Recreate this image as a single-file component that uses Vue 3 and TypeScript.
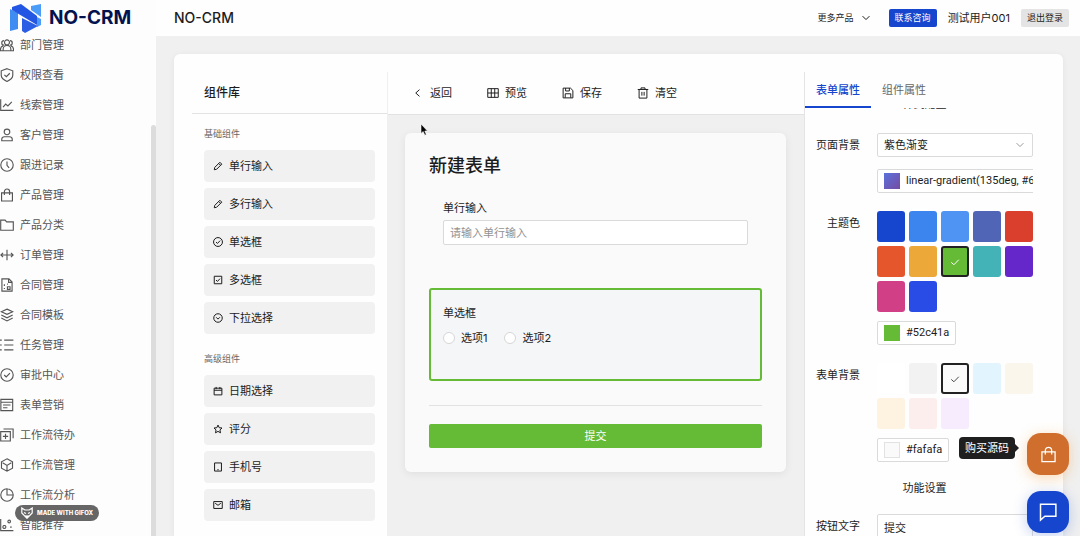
<script setup lang="ts">
import { ref } from 'vue'

interface Entry {
  icon: string
  label: string
}

// Outlines on a 16 × 16 grid, drawn with a stroke
const icons: Record<string, string> = {
  team: 'M8 2.2a2.8 2.8 0 1 1 0 5.6a2.8 2.8 0 1 1 0-5.6zM3.6 14.6v-1.8a4.4 4.4 0 0 1 8.8 0v1.8zM4.6 8.2a2.6 2.6 0 0 1 0-5.2M11.4 8.2a2.6 2.6 0 0 0 0-5.2M3.4 9a4 4 0 0 0-2.8 4v1.6h3M12.6 9a4 4 0 0 1 2.8 4v1.6h-3',
  shield: 'M8 .8l6.6 2.4v5.2c0 3.2-3 5.4-6.6 7C4.4 13.8 1.4 11.6 1.4 8.4V3.2zM5 7.8l2.3 2.2l3.9-4',
  chart: 'M.8 1.5v12.7h14.5M3.5 10.5l3-3.5l2.5 2l4.5-4.5',
  user: 'M8 1.3a3.2 3.2 0 1 1 0 6.4a3.2 3.2 0 1 1 0-6.4zM2 14.6v-2a3 3 0 0 1 3-2.600h6a3 3 0 0 1 3 2.6v2z',
  clock: 'M8 .9a7.1 7.1 0 1 1 0 14.2a7.1 7.1 0 1 1 0-14.2zM8 4v4.4l2.4 2.8',
  bag: 'M1.8 5.5h12.4v9.3H1.8zM5 8V4.2a3 3 0 0 1 6 0V8',
  folder: 'M.8 2.5h5l1.8 2h7.6v9.5H.8z',
  split: 'M8 2v12M.8 8h14.4M3.5 5.5L1 8l2.5 2.5M12.5 5.5L15 8l-2.5 2.5',
  doc: 'M2.2 1h8l3.6 3.6V15H2.2zM9.8 1v4h4M5 7v2M8 7h1M5 11.5v1M8.5 10h3v3h-3z',
  layers: 'M8 1.3l6.500 3l-6.500 3l-6.500-3zM1.500 8L8 11.200L14.500 8M1.500 11.500L8 14.800l6.500-3.300',
  list: 'M4.800 2.500h10.500M4.800 8h10.500M4.800 13.500h10.500M0 2.500h2M0 8h2M0 13.500h2',
  check: 'M8 .9a7.1 7.1 0 1 1 0 14.2a7.1 7.1 0 1 1 0-14.2zM4.8 8l2.3 2.3l4.3-4.5',
  form: 'M1 1.5h13.5v13H1zM1 4.8h13.5M3.5 8h8.5M3.5 11.2h5',
  addbox: 'M.8 4.2h11v10.6H.8zM4 1.2h11v10.5M6.3 6.5v6M3.3 9.5h6',
  cube: 'M8 .9l6.3 3.5v7.2L8 15.1l-6.3-3.5V4.4zM3 5.5l5 3l5-3M8 8.5v6',
  pie: 'M8 .9a7.1 7.1 0 1 0 7.1 7.1H8zM8 .9a7.1 7.1 0 0 1 7.1 7.1',
  scatter: 'M.8 1v13.5h14.5M5 8.5a1.7 1.7 0 1 1 0 3.4a1.7 1.7 0 1 1 0-3.4zM10.5 2.5a1.5 1.5 0 1 1 0 3a1.5 1.5 0 1 1 0-3zM12.5 9.5v2',
  pencil: 'M2 14l.8-3.8L11 2l3 3l-8.2 8.2zM9.2 4l2.8 2.8',
  checkbox: 'M2 2h12v12H2zM4.8 8l2.3 2.3l4.1-4.5',
  drop: 'M8 1.2a6.8 6.8 0 1 1 0 13.6a6.8 6.8 0 1 1 0-13.6zM5 6.8l3 3l3-3',
  calendar: 'M1.8 3.5h12.4v10.7H1.8zM1.8 6.8h12.4M5 1.5v3.5M11 1.5v3.5',
  star: 'M8 1.7l1.9 4.2l4.5.5l-3.3 3.1l.9 4.6L8 11.8l-4 2.3l.9-4.6L1.6 6.4l4.5-.5z',
  phone: 'M2.5 1.5h11v13h-11zM7 12.3h2',
  mail: 'M1.2 2.5h13.6v11H1.2zM3.5 5.2L8 8.5l4.5-3.3',
  left: 'M10 3.5L5 8l5 4.5',
  table: 'M1 2.2h14v11.6H1zM1 8h14M5.7 2.2v11.6M10.3 2.2v11.6',
  save: 'M1.5 1.5h9.800l3.200 3.200v9.800h-13zM4.800 1.500v3.800h5V1.500M4.300 14.300V9h7.400v5.300',
  trash: 'M1 3.3h14M5.3 3V1.2h5.4V3M2.8 3.3v11.5h10.4V3.3M6.500 6.500v5M9.500 6.500v5',
  down: 'M2.5 5L8 10.5L13.5 5',
  tick: 'M3 8.5l3.5 3.2L13 5',
  chat: 'M2 1.7h12.3v9.6H5.5L2 14.5z'
}

const menu: Entry[] = [
  { icon: 'team', label: '部门管理' },
  { icon: 'shield', label: '权限查看' },
  { icon: 'chart', label: '线索管理' },
  { icon: 'user', label: '客户管理' },
  { icon: 'clock', label: '跟进记录' },
  { icon: 'bag', label: '产品管理' },
  { icon: 'folder', label: '产品分类' },
  { icon: 'split', label: '订单管理' },
  { icon: 'doc', label: '合同管理' },
  { icon: 'layers', label: '合同模板' },
  { icon: 'list', label: '任务管理' },
  { icon: 'check', label: '审批中心' },
  { icon: 'form', label: '表单营销' },
  { icon: 'addbox', label: '工作流待办' },
  { icon: 'cube', label: '工作流管理' },
  { icon: 'pie', label: '工作流分析' },
  { icon: 'scatter', label: '智能推荐' }
]

const groups: { title: string; items: Entry[] }[] = [
  {
    title: '基础组件',
    items: [
      { icon: 'pencil', label: '单行输入' },
      { icon: 'pencil', label: '多行输入' },
      { icon: 'check', label: '单选框' },
      { icon: 'checkbox', label: '多选框' },
      { icon: 'drop', label: '下拉选择' }
    ]
  },
  {
    title: '高级组件',
    items: [
      { icon: 'calendar', label: '日期选择' },
      { icon: 'star', label: '评分' },
      { icon: 'phone', label: '手机号' },
      { icon: 'mail', label: '邮箱' }
    ]
  }
]

const tools: Entry[] = [
  { icon: 'left', label: '返回' },
  { icon: 'table', label: '预览' },
  { icon: 'save', label: '保存' },
  { icon: 'trash', label: '清空' }
]

const themeColors: string[] = [
  '#1546cd', '#3d85ee', '#4f94f3', '#5065b6', '#da3f2d', '#e5562d',
  '#eda83a', '#66bb36', '#44b3b8', '#6527c9', '#d13f86', '#2a4ce6'
]
const formColors: string[] = [
  '#ffffff', '#f2f2f2', '#fafafa', '#e2f5fe', '#fbf6ec', '#fef3e0', '#fceeed', '#f6ecfe'
]

const theme = ref('#66bb36')
const formColor = ref('#fafafa')
const pageBackground = ref('紫色渐变')
const buttonText = ref('提交')
const option = ref('')
</script>

<template>
  <div class="app">
    <aside class="side">
      <div class="brand">
        <svg class="brand-mark" viewBox="0 0 32 30" aria-hidden="true">
          <path d="M0 6L8 10V26L0 28z" fill="#3f8df3" />
          <path d="M21 3L31 1V14L21 7z" fill="#4b9cf8" />
          <path d="M27 14L31 16V22L27 24z" fill="#4b9cf8" />
          <path d="M2 4L11 1L27 13V22L2 7z" fill="#2456e4" />
          <path d="M12 15L28 23L15 30L12 28z" fill="#2a5ee4" />
        </svg>
        <span class="brand-name">NO-CRM</span>
      </div>
      <nav class="menu">
        <ul>
          <li v-for="m in menu" :key="m.label">
            <a href="#">
              <svg class="ico" viewBox="0 0 16 16" aria-hidden="true"><path :d="icons[m.icon]" /></svg>
              {{ m.label }}
            </a>
          </li>
        </ul>
        <span class="thumb"></span>
      </nav>
    </aside>

    <div class="body">
      <header class="top">
        <h1>NO-CRM</h1>
        <button class="more" type="button">
          更多产品
          <svg class="ico small" viewBox="0 0 16 16" aria-hidden="true"><path :d="icons.down" /></svg>
        </button>
        <button class="contact" type="button">联系咨询</button>
        <span class="account">测试用户001</span>
        <button class="logout" type="button">退出登录</button>
      </header>

      <main class="main">
        <div class="designer">
          <section class="library">
            <h2>组件库</h2>
            <div v-for="g in groups" :key="g.title" class="group">
              <h3>{{ g.title }}</h3>
              <button v-for="c in g.items" :key="c.label" class="component" type="button">
                <svg class="ico small" viewBox="0 0 16 16" aria-hidden="true"><path :d="icons[c.icon]" /></svg>
                {{ c.label }}
              </button>
            </div>
          </section>

          <section class="stage">
            <div class="toolbar">
              <button v-for="t in tools" :key="t.label" type="button">
                <svg class="ico mid" viewBox="0 0 16 16" aria-hidden="true"><path :d="icons[t.icon]" /></svg>
                {{ t.label }}
              </button>
            </div>
            <div class="canvas">
              <form class="sheet" @submit.prevent>
                <h2>新建表单</h2>
                <div class="field">
                  <label class="caption" for="single">单行输入</label>
                  <input id="single" class="text" type="text" placeholder="请输入单行输入" />
                </div>
                <fieldset class="field selected">
                  <legend class="caption">单选框</legend>
                  <div class="options">
                    <label><input v-model="option" type="radio" value="1" />选项1</label>
                    <label><input v-model="option" type="radio" value="2" />选项2</label>
                  </div>
                </fieldset>
                <hr />
                <button class="submit" type="submit">{{ buttonText }}</button>
              </form>
            </div>
          </section>

          <section class="props">
            <div class="tabs" role="tablist">
              <button class="on" type="button" role="tab" aria-selected="true">表单属性</button>
              <button type="button" role="tab" aria-selected="false">组件属性</button>
            </div>
            <div class="scroll">
              <h3 class="heading first">样式配置</h3>
              <div class="row">
                <label class="name" for="page-bg">页面背景</label>
                <div class="control">
                  <div class="select">
                    <select id="page-bg" v-model="pageBackground">
                      <option>紫色渐变</option>
                    </select>
                    <svg class="ico small" viewBox="0 0 16 16" aria-hidden="true"><path :d="icons.down" /></svg>
                  </div>
                  <button class="value" type="button">
                    <span class="chip violet"></span>linear-gradient(135deg, #667eea 0%, #764ba2 100%)
                  </button>
                </div>
              </div>
              <div class="row">
                <span id="theme-name" class="name">主题色</span>
                <div class="control">
                  <div class="swatches" role="radiogroup" aria-labelledby="theme-name">
                    <label v-for="c in themeColors" :key="c" class="swatch">
                      <input v-model="theme" type="radio" name="theme" :value="c" :aria-label="c" :style="{ background: c }" />
                      <svg v-if="theme === c" class="ico mid" viewBox="0 0 16 16" aria-hidden="true"><path :d="icons.tick" /></svg>
                    </label>
                  </div>
                  <button class="value" type="button"><span class="chip green"></span>#52c41a</button>
                </div>
              </div>
              <div class="row">
                <span id="form-name" class="name">表单背景</span>
                <div class="control">
                  <div class="swatches light" role="radiogroup" aria-labelledby="form-name">
                    <label v-for="c in formColors" :key="c" class="swatch">
                      <input v-model="formColor" type="radio" name="form" :value="c" :aria-label="c" :style="{ background: c }" />
                      <svg v-if="formColor === c" class="ico mid" viewBox="0 0 16 16" aria-hidden="true"><path :d="icons.tick" /></svg>
                    </label>
                  </div>
                  <button class="value" type="button"><span class="chip pale"></span>#fafafa</button>
                </div>
              </div>
              <h3 class="heading">功能设置</h3>
              <div class="row">
                <label class="name" for="btn-text">按钮文字</label>
                <div class="control">
                  <input id="btn-text" v-model="buttonText" class="text" type="text" />
                </div>
              </div>
            </div>
          </section>
        </div>
      </main>
    </div>

    <div class="floats">
      <span class="tip">购买源码</span>
      <button class="float buy" type="button" aria-label="购买源码">
        <svg class="ico" viewBox="0 0 16 16" aria-hidden="true"><path :d="icons.bag" /></svg>
      </button>
      <button class="float talk" type="button" aria-label="联系咨询">
        <svg class="ico" viewBox="0 0 16 16" aria-hidden="true"><path :d="icons.chat" /></svg>
      </button>
    </div>

    <div class="gifox">
      <svg viewBox="0 0 12 12" aria-hidden="true">
        <path d="M.8 1l3 2h4.400l3-2v5L6 11.300L.8 6zM3 5.500l2 1M9 5.500l-2 1M4.500 8.500L6 9.500l1.500-1" />
      </svg>
      MADE WITH GIFOX
    </div>

    <svg class="cursor" viewBox="0 0 8 14" aria-hidden="true">
      <path d="M1 1v9.500l2.200-2l1.600 3.700l1.500-.7l-1.500-3.500h2.700z" />
    </svg>
  </div>
</template>

<style>
html,
body {
  margin: 0;
  overflow: hidden;
}
</style>

<style scoped>
.app {
  position: relative;
  display: flex;
  height: 100vh;
  overflow: hidden;
  background: #f0f0f0;
  color: #1c1c1c;
  font: 11px/16px Inter, "Noto Sans CJK SC", sans-serif;
}
.app *,
.app *::before {
  box-sizing: border-box;
}
h1,
h2,
h3,
ul {
  margin: 0;
  padding: 0;
}
button,
input,
select {
  margin: 0;
  padding: 0;
  border: 0;
  background: none;
  color: inherit;
  font: inherit;
}
.ico {
  flex: none;
  width: 14px;
  height: 14px;
  fill: none;
  stroke: currentColor;
  stroke-width: 1.3;
}
.ico.mid {
  width: 12px;
  height: 12px;
}
.ico.small {
  width: 10px;
  height: 10px;
  stroke-width: 1.6;
}

/* Side navigation */
.side {
  display: flex;
  flex: none;
  flex-direction: column;
  width: 156px;
  background: #fdfdfd;
}
.brand {
  z-index: 1;
  display: flex;
  flex: none;
  align-items: center;
  gap: 7px;
  height: 36px;
  padding-left: 10px;
}
.brand-mark {
  width: 32px;
  height: 30px;
}
.brand-name {
  color: #03134f;
  font-size: 19px;
  font-weight: 700;
}
.menu {
  position: relative;
  flex: 1;
  min-height: 0;
}
.menu ul {
  margin-top: -6px;
  list-style: none;
}
.menu a {
  display: flex;
  align-items: center;
  gap: 6px;
  height: 30px;
  color: #555;
  text-decoration: none;
}
.thumb {
  position: absolute;
  top: 89px;
  right: 0;
  bottom: 0;
  width: 5px;
  border-radius: 3px 3px 0 0;
  background: #dcdcdc;
}

/* Header */
.body {
  display: flex;
  flex: 1;
  flex-direction: column;
  min-width: 0;
}
.top {
  display: flex;
  flex: none;
  align-items: center;
  gap: 11px;
  height: 36px;
  padding: 0 11px 0 18px;
  background: #fefefe;
}
.top h1 {
  flex: 1;
  font-size: 14px;
  font-weight: 500;
}
.top button {
  height: 18px;
  font-size: 9px;
}
.more {
  display: flex;
  align-items: center;
  gap: 7px;
  margin-right: 7px;
}
.top .contact,
.top .logout {
  padding: 0 6px;
  border-radius: 2px;
}
.contact {
  background: #1546cd;
  color: #fff;
}
.logout {
  background: #e4e4e4;
}

/* Designer shell */
.main {
  flex: 1;
  min-height: 0;
  padding: 18px 17px 0 18px;
}
.designer {
  display: flex;
  height: 100%;
  padding: 18px 18px 0;
  border-radius: 6px 6px 0 0;
  background: #fefefe;
  box-shadow: 0 1px 6px rgba(0, 0, 0, 0.06);
}

/* Component library */
.library {
  flex: none;
  width: 196px;
  border-right: 1px solid #efefef;
  overflow: hidden;
}
.library h2 {
  height: 42px;
  padding-left: 12px;
  border-bottom: 1px solid #e2e2e2;
  font-size: 12px;
  font-weight: 500;
  line-height: 41px;
}
.group {
  display: flex;
  flex-direction: column;
  gap: 6px;
  padding: 13px 12px 5px;
}
.group h3 {
  margin-bottom: 3px;
  color: #666;
  font-size: 9px;
  font-weight: 400;
  line-height: 14px;
}
.component {
  display: flex;
  align-items: center;
  gap: 6px;
  height: 32px;
  padding-left: 9px;
  border-radius: 4px;
  background: #f1f1f1;
}

/* Toolbar and canvas */
.stage {
  display: flex;
  flex: 1;
  flex-direction: column;
  min-width: 0;
}
.toolbar {
  display: flex;
  gap: 11px;
  height: 43px;
  padding: 0 12px;
  border-bottom: 1px solid #e2e2e2;
}
.toolbar button {
  display: flex;
  align-items: center;
  gap: 6px;
  padding: 0 12px;
}
.canvas {
  flex: 1;
  min-height: 0;
  padding: 18px 18px 0 17px;
  background: #f0f0f0;
}
.sheet {
  padding: 24px;
  border-radius: 6px;
  background: #fafafa;
  box-shadow: 0 2px 8px rgba(0, 0, 0, 0.07);
}
.sheet h2 {
  margin-bottom: 8px;
  font-size: 18px;
  font-weight: 500;
  line-height: 18px;
}
.field {
  height: 93px;
  min-width: 0;
  margin: 0 0 12px;
  padding: 15px 12px 0;
  border: 2px solid transparent;
  border-radius: 3px;
}
.field.selected {
  margin-bottom: 24px;
  border-color: #66bb36;
  background: #f4f6f8;
}
.caption {
  display: block;
  float: left;
  width: 100%;
  padding: 0;
}
.text {
  display: block;
  width: 100%;
  height: 25px;
  padding: 0 6px;
  border: 1px solid #dadada;
  border-radius: 2px;
  background: #fff;
}
.field .text {
  margin-top: 20px;
}
.text::placeholder {
  color: #929292;
  opacity: 1;
}
.options {
  display: flex;
  gap: 17px;
  padding-top: 9px;
  clear: both;
}
.options label {
  display: flex;
  align-items: center;
  gap: 6px;
}
.options input {
  width: 12px;
  height: 12px;
  border: 1px solid #d6d6d6;
  border-radius: 50%;
  background: #fff;
  appearance: none;
}
.sheet hr {
  height: 1px;
  margin: 0 0 18px;
  border: 0;
  background: #e2e2e2;
}
.submit {
  display: block;
  width: 100%;
  height: 24px;
  border-radius: 2px;
  background: #66bb36;
  color: #fff;
}

/* Property panel */
.props {
  display: flex;
  flex: none;
  flex-direction: column;
  width: 241px;
  border-left: 1px solid #e4e4e4;
}
.tabs {
  display: flex;
  flex: none;
  height: 36px;
}
.tabs button {
  padding: 2px 11px 0;
  border-bottom: 2px solid transparent;
  color: #666;
}
.tabs .on {
  border-color: #1546cd;
  color: #1546cd;
  font-weight: 500;
}
.scroll {
  flex: 1;
  min-height: 0;
  padding: 0 12px 0 11px;
  overflow: hidden;
}
.heading {
  margin: 18px 0;
  font-size: 11px;
  font-weight: 400;
  line-height: 16px;
  text-align: center;
}
.heading.first {
  margin-top: -12px;
  margin-bottom: 21px;
}
.row {
  display: flex;
  gap: 17px;
  margin-bottom: 18px;
}
.name {
  flex: none;
  width: 44px;
  line-height: 24px;
  text-align: right;
}
.control {
  flex: 1;
  min-width: 0;
  overflow: hidden;
}
.select {
  position: relative;
  margin-bottom: 12px;
}
.select select {
  display: block;
  width: 100%;
  height: 24px;
  padding: 0 6px;
  border: 1px solid #dadada;
  border-radius: 2px;
  background: #fff;
  appearance: none;
}
.select .ico {
  position: absolute;
  top: 7px;
  right: 8px;
  color: #999;
}
.value {
  display: flex;
  align-items: center;
  gap: 6px;
  height: 24px;
  padding: 0 6px;
  border: 1px solid #dadada;
  border-radius: 2px;
  background: #fff;
  font-family: Roboto, sans-serif;
  white-space: nowrap;
}
.chip {
  flex: none;
  width: 16px;
  height: 16px;
}
.violet {
  background: linear-gradient(135deg, #5a72dc, #764ba2);
}
.green {
  background: #66bb36;
}
.pale {
  border: 1px solid #e2e2e2;
  background: #fafafa;
}
.swatches {
  display: grid;
  grid-template-columns: repeat(5, 1fr);
  gap: 4px;
  margin-bottom: 9px;
}
.swatch {
  position: relative;
  display: block;
  height: 31px;
}
.swatch input {
  display: block;
  width: 100%;
  height: 100%;
  border-radius: 3px;
  appearance: none;
}
.swatch input:checked {
  border: 2px solid #222;
}
.swatch .ico {
  position: absolute;
  inset: 0;
  margin: auto;
  color: #fff;
}
.light .swatch .ico {
  color: #444;
}

/* Floating actions */
.floats {
  position: absolute;
  right: 11px;
  bottom: 3px;
  display: flex;
  flex-direction: column;
  gap: 16px;
}
.float {
  display: flex;
  align-items: center;
  justify-content: center;
  width: 42px;
  height: 42px;
  border-radius: 14px;
  color: #fff;
}
.float .ico {
  width: 20px;
  height: 20px;
  stroke-width: 1.2;
}
.buy {
  background: #cf6e2d;
  box-shadow: 0 3px 14px rgba(240, 160, 70, 0.4);
}
.buy .ico {
  width: 17px;
  height: 17px;
}
.talk {
  background: #1546cd;
  box-shadow: 0 3px 14px rgba(21, 70, 205, 0.25);
}
.tip {
  position: absolute;
  top: 4px;
  right: 54px;
  padding: 3px 6px;
  border-radius: 4px;
  background: #1f1f1f;
  color: #fff;
  white-space: nowrap;
}
.tip::before {
  position: absolute;
  top: 7px;
  left: 100%;
  border: 4px solid transparent;
  border-left-color: #1f1f1f;
  content: "";
}

/* Recorder badge and pointer */
.gifox {
  position: absolute;
  bottom: 15px;
  left: 15px;
  display: flex;
  align-items: center;
  gap: 4px;
  height: 16px;
  padding: 0 6px;
  border-radius: 8px;
  background: #666;
  color: #fff;
  font-size: 6px;
  font-weight: 800;
}
.gifox svg {
  width: 12px;
  height: 12px;
  fill: none;
  stroke: #fff;
  stroke-width: 1.2;
}
.cursor {
  position: absolute;
  top: 123px;
  left: 420px;
  width: 8px;
  height: 14px;
  fill: #000;
  stroke: #fff;
  stroke-width: 0.6;
}
</style>
